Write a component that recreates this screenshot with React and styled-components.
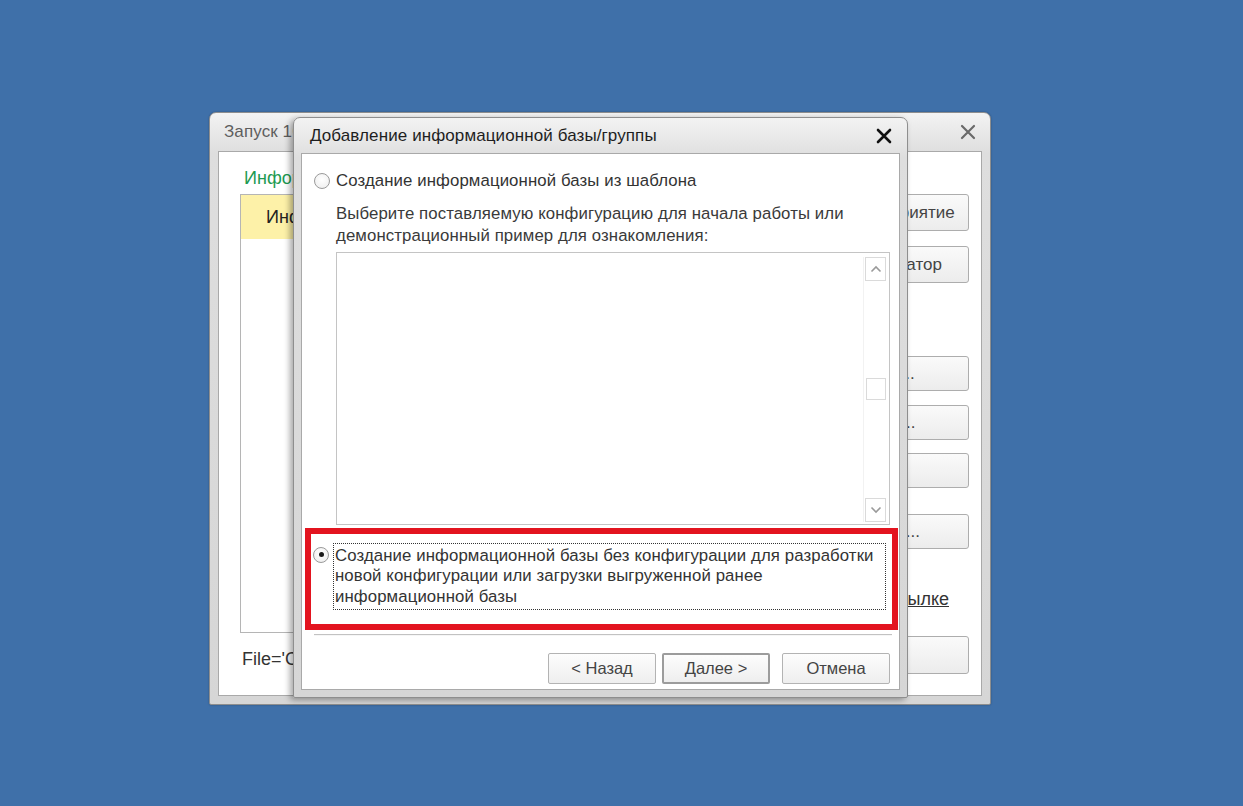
import React from "react";
import styled, { createGlobalStyle } from "styled-components";

const Global = createGlobalStyle`
  html, body { margin: 0; padding: 0; }
  body {
    width: 1243px;
    height: 806px;
    background: #3f70a9;
    font-family: "Liberation Sans", Arial, sans-serif;
    overflow: hidden;
  }
`;

const Desktop = styled.div`
  position: relative;
  width: 1243px;
  height: 806px;
`;

const Window = styled.div`
  position: absolute;
  left: ${(p) => p.$x}px;
  top: ${(p) => p.$y}px;
  width: ${(p) => p.$w}px;
  height: ${(p) => p.$h}px;
  box-sizing: border-box;
  display: flex;
  flex-direction: column;
  border: 1px solid #8e8e8e;
  border-radius: 7px 7px 2px 2px;
  background: linear-gradient(#f3f3f3, #dedede 40px, #d6d6d6);
  box-shadow: ${(p) => (p.$shadow ? "-3px 2px 6px rgba(0,0,0,0.35)" : "0 0 2px rgba(0,0,0,0.3)")};
  padding: 0 ${(p) => p.$side}px ${(p) => p.$bottom}px;
`;

const TitleBar = styled.div`
  height: ${(p) => p.$h}px;
  flex: none;
  display: flex;
  align-items: center;
  justify-content: space-between;
  padding: 0 ${(p) => p.$pr}px 0 ${(p) => p.$pl}px;
  overflow: hidden;
`;

const Title = styled.span`
  font-size: ${(p) => p.$size}px;
  color: ${(p) => p.$color};
  white-space: nowrap;
  letter-spacing: 0.1px;
`;

const CloseGlyph = styled.svg`
  width: 16px;
  height: 16px;
  flex: none;
`;

const Close = ({ color, weight }) => (
  <CloseGlyph viewBox="0 0 16 16">
    <path d="M2 2 L14 14 M14 2 L2 14" stroke={color} strokeWidth={weight} strokeLinecap="round" />
  </CloseGlyph>
);

const Client = styled.div`
  flex: 1;
  background: #fff;
  border: 1px solid #a9a9a9;
  box-sizing: border-box;
  position: relative;
  overflow: hidden;
`;

/* ---------- background launcher window ---------- */

const LauncherBody = styled.div`
  display: flex;
  height: 100%;
  box-sizing: border-box;
  padding: 16px 12px 0 21px;
  gap: 14px;
`;

const LeftCol = styled.div`
  flex: 1;
  display: flex;
  flex-direction: column;
`;

const GreenLabel = styled.div`
  font-size: 18px;
  color: #1d9a52;
  height: 26px;
  padding-left: 4px;
`;

const ListBox = styled.div`
  height: 439px;
  border: 1px solid #b5b5b5;
  box-sizing: border-box;
  background: #fff;
`;

const ListHeader = styled.div`
  height: 44px;
  background: #fdf1a8;
  display: flex;
  align-items: center;
  padding-left: 25px;
  font-size: 18px;
  color: #222;
`;

const FileText = styled.div`
  margin-top: 16px;
  font-size: 18px;
  color: #333;
  padding-left: 2px;
`;

const RightCol = styled.div`
  width: 140px;
  flex: none;
  display: flex;
  flex-direction: column;
  padding-top: 26px;
`;

const SideButton = styled.div`
  margin-top: ${(p) => p.$mt}px;
  height: ${(p) => p.$h || 36}px;
  box-sizing: border-box;
  border: 1px solid #adadad;
  border-radius: 3px;
  background: linear-gradient(#fafafa, #ececec);
  display: flex;
  align-items: center;
  justify-content: center;
  padding-right: ${(p) => p.$pr || 0}px;
  font-size: 17px;
  color: #444;
  white-space: nowrap;
`;

const SideLink = styled.div`
  margin-top: ${(p) => p.$mt}px;
  font-size: 18px;
  color: #333;
  text-decoration: underline;
  text-align: right;
  padding-right: 20px;
  white-space: nowrap;
`;

/* ---------- dialog ---------- */

const DialogBody = styled.div`
  display: flex;
  flex-direction: column;
  height: 100%;
  box-sizing: border-box;
  padding: 17px 9px 0 2px;
`;

const RadioRow = styled.div`
  display: flex;
  align-items: ${(p) => (p.$top ? "flex-start" : "center")};
  padding-left: ${(p) => p.$pl}px;
  gap: ${(p) => p.$gap}px;
`;

const Radio = styled.span`
  width: 16px;
  height: 16px;
  flex: none;
  box-sizing: border-box;
  border-radius: 50%;
  border: 1px solid #9a9a9a;
  background: radial-gradient(circle at 50% 40%, #ffffff, #ececec);
  display: flex;
  align-items: center;
  justify-content: center;
  margin-top: ${(p) => (p.$top ? "4px" : "0")};
  &::after {
    content: "";
    width: 5px;
    height: 5px;
    border-radius: 50%;
    background: #1a1a1a;
    display: ${(p) => (p.$checked ? "block" : "none")};
  }
`;

const OptionText = styled.div`
  font-size: 16.8px;
  line-height: 20.5px;
  color: #333;
  letter-spacing: 0.1px;
  white-space: nowrap;
`;

const Focused = styled(OptionText)`
  flex: 1;
  border: 1px dotted #333;
  padding: 2px 0 2px 1px;
`;

const Description = styled.div`
  margin: 11px 0 0 32px;
  font-size: 16.8px;
  line-height: 22px;
  color: #3a3a3a;
  letter-spacing: 0.1px;
  white-space: nowrap;
`;

const ConfigList = styled.div`
  margin: 5px 0 0 32px;
  height: 273px;
  border: 1px solid #c4c4c4;
  box-sizing: border-box;
  display: flex;
  justify-content: flex-end;
  padding: 4px 2px 2px 0;
`;

const ScrollBar = styled.div`
  width: 23px;
  display: flex;
  flex-direction: column;
  justify-content: space-between;
  align-items: center;
  border-left: 1px solid #f2f2f2;
  position: relative;
`;

const ScrollBtn = styled.div`
  width: 21px;
  height: 24px;
  box-sizing: border-box;
  border: 1px solid #dadada;
  background: #fff;
  display: flex;
  align-items: center;
  justify-content: center;
`;

const Thumb = styled.div`
  width: 20px;
  height: 22px;
  box-sizing: border-box;
  border: 1px solid #dadada;
  background: #fff;
`;

const Chevron = ({ up }) => (
  <svg width="12" height="8" viewBox="0 0 12 8">
    <path
      d={up ? "M1.5 6.5 L6 2 L10.5 6.5" : "M1.5 1.5 L6 6 L10.5 1.5"}
      fill="none"
      stroke="#9a9a9a"
      strokeWidth="1.6"
    />
  </svg>
);

const Highlight = styled.div`
  margin: 3px 0 0 1px;
  width: 593px;
  height: 102px;
  box-sizing: border-box;
  border: 6px solid #e3141f;
  padding: 9px 6px 0 0;
`;

const Separator = styled.div`
  margin: 4px 0 0 10px;
  height: 0;
  border-top: 1px solid #c2c2c2;
  border-bottom: 1px solid #f6f6f6;
  width: 578px;
`;

const ButtonRow = styled.div`
  display: flex;
  justify-content: flex-end;
  gap: 6px;
  margin-top: 17px;
  padding-right: 0;
`;

const DlgButton = styled.div`
  width: 108px;
  height: 31px;
  margin-left: ${(p) => p.$ml || 0}px;
  box-sizing: border-box;
  border: ${(p) => (p.$default ? "2px solid #9c9c9c" : "1px solid #b3b3b3")};
  border-radius: 2px;
  background: linear-gradient(#fdfdfd, #eeeeee);
  display: flex;
  align-items: center;
  justify-content: center;
  font-size: 16.5px;
  color: #444;
`;

export default function App() {
  return (
    <>
      <Global />
      <Desktop>
        <Window $x={209} $y={112} $w={782} $h={593} $side={8} $bottom={8}>
          <TitleBar $h={38} $pl={6} $pr={6}>
            <Title $size={17} $color="#5e5e5e">Запуск 1С:Предприятия</Title>
            <Close color="#6a6a6a" weight={2.2} />
          </TitleBar>
          <Client>
            <LauncherBody>
              <LeftCol>
                <GreenLabel>Информационные базы</GreenLabel>
                <ListBox>
                  <ListHeader>Информационная база</ListHeader>
                </ListBox>
                <FileText>File='C:\Users\1C\Documents\InfoBase'</FileText>
              </LeftCol>
              <RightCol>
                <SideButton $mt={0} $h={37} $pr={20}>1С:Предприятие</SideButton>
                <SideButton $mt={15} $h={37} $pr={26}>Конфигуратор</SideButton>
                <SideButton $mt={73} $h={35} $pr={58}>Добавить...</SideButton>
                <SideButton $mt={14} $h={35} $pr={58}>Изменить...</SideButton>
                <SideButton $mt={13} $h={35} $pr={60}>Удалить</SideButton>
                <SideButton $mt={26} $h={35} $pr={56}>Настройка...</SideButton>
                <SideLink $mt={40}>По ссылке</SideLink>
                <SideButton $mt={26} $h={38} $pr={70}>Выход</SideButton>
              </RightCol>
            </LauncherBody>
          </Client>
        </Window>

        <Window $x={293} $y={117} $w={615} $h={581} $side={7} $bottom={7} $shadow>
          <TitleBar $h={35} $pl={9} $pr={8}>
            <Title $size={17} $color="#1e1e1e">Добавление информационной базы/группы</Title>
            <Close color="#111" weight={2.6} />
          </TitleBar>
          <Client>
            <DialogBody>
              <RadioRow $pl={10} $gap={6}>
                <Radio />
                <OptionText>Создание информационной базы из шаблона</OptionText>
              </RadioRow>
              <Description>
                Выберите поставляемую конфигурацию для начала работы или
                <br />
                демонстрационный пример для ознакомления:
              </Description>
              <ConfigList>
                <ScrollBar>
                  <ScrollBtn>
                    <Chevron up />
                  </ScrollBtn>
                  <Thumb />
                  <ScrollBtn>
                    <Chevron />
                  </ScrollBtn>
                </ScrollBar>
              </ConfigList>
              <Highlight>
                <RadioRow $top $pl={2} $gap={4}>
                  <Radio $checked $top />
                  <Focused>
                    Создание информационной базы без конфигурации для разработки
                    <br />
                    новой конфигурации или загрузки выгруженной ранее
                    <br />
                    информационной базы
                  </Focused>
                </RadioRow>
              </Highlight>
              <Separator />
              <ButtonRow>
                <DlgButton>&lt; Назад</DlgButton>
                <DlgButton $default>Далее &gt;</DlgButton>
                <DlgButton $ml={6}>Отмена</DlgButton>
              </ButtonRow>
            </DialogBody>
          </Client>
        </Window>
      </Desktop>
    </>
  );
}
